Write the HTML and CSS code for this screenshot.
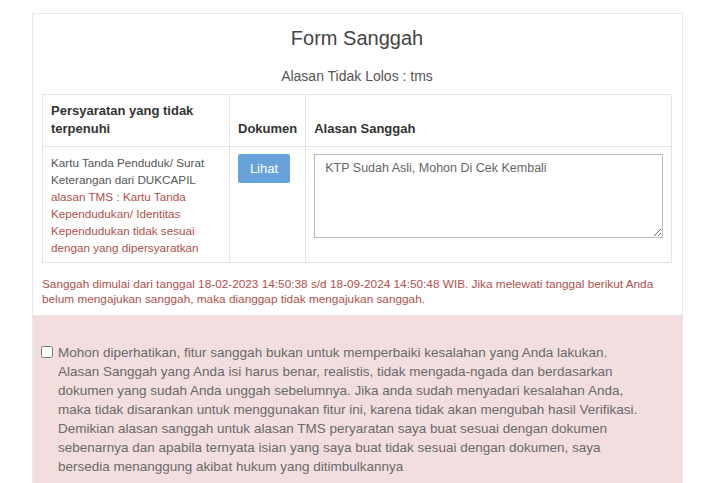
FILE: index.html
```html
<!DOCTYPE html>
<html lang="id">
<head>
  <meta charset="UTF-8" />
  <meta name="viewport" content="width=device-width, initial-scale=1.0" />
  <title>Form Sanggah</title>
  <link rel="stylesheet" href="styles.css">
</head>
<body>
  <div class="card">
    <div class="card-body">
      <h3 class="title">Form Sanggah</h3>
      <p class="subtitle">Alasan Tidak Lolos : tms</p>

      <table class="tbl">
        <thead>
          <tr>
            <th class="col-req">Persyaratan yang tidak terpenuhi</th>
            <th class="col-doc">Dokumen</th>
            <th>Alasan Sanggah</th>
          </tr>
        </thead>
        <tbody>
          <tr>
            <td>
              Kartu Tanda Penduduk/ Surat Keterangan dari DUKCAPIL
              <span class="text-danger">alasan TMS : Kartu Tanda Kependudukan/ Identitas Kependudukan tidak sesuai dengan yang dipersyaratkan</span>
            </td>
            <td><button type="button" class="btn">Lihat</button></td>
            <td><textarea class="reason" rows="4">KTP Sudah Asli, Mohon Di Cek Kembali</textarea></td>
          </tr>
        </tbody>
      </table>

      <p class="note">Sanggah dimulai dari tanggal 18-02-2023 14:50:38 s/d 18-09-2024 14:50:48 WIB. Jika melewati tanggal berikut Anda belum mengajukan sanggah, maka dianggap tidak mengajukan sanggah.</p>
    </div>

    <div class="alert">
      <label class="check">
        <input type="checkbox" />
        Mohon diperhatikan, fitur sanggah bukan untuk memperbaiki kesalahan yang Anda lakukan.<br>
        Alasan Sanggah yang Anda isi harus benar, realistis, tidak mengada-ngada dan berdasarkan dokumen yang sudah Anda unggah sebelumnya. Jika anda sudah menyadari kesalahan Anda, maka tidak disarankan untuk menggunakan fitur ini, karena tidak akan mengubah hasil Verifikasi. Demikian alasan sanggah untuk alasan TMS peryaratan saya buat sesuai dengan dokumen sebenarnya dan apabila ternyata isian yang saya buat tidak sesuai dengan dokumen, saya bersedia menanggung akibat hukum yang ditimbulkannya
      </label>
    </div>
  </div>
</body>
</html>
```

FILE: styles.css
```css
body { margin: 0; background: #fff; font-family: "Liberation Sans", Arial, sans-serif; color: #555; }

.card { margin: 13px 0 0 32px; width: 649px; border: 1px solid #e3ebee; border-bottom: none; background: #fff; }
.card-body { padding: 12px 10px 0 9px; }

.title { margin: 0; font-size: 20px; line-height: 24px; font-weight: normal; color: #444; text-align: center; }
.subtitle { margin: 16px 0 8px; font-size: 14px; line-height: 20px; color: #555; text-align: center; }

.tbl { width: 100%; border-collapse: collapse; border: 1px solid #e4e4e4; }
.tbl th, .tbl td { border: 1px solid #e4e4e4; padding: 7px 8px 8px; text-align: left; }
.tbl th { font-size: 13px; line-height: 18px; font-weight: bold; color: #333; vertical-align: bottom; }
.tbl td { font-size: 11.7px; line-height: 17px; color: #555; vertical-align: top; }
.tbl td:first-child { padding-bottom: 6px; }
.col-req { width: 170px; }
.col-doc { width: 53px; }
.text-danger { color: #b0504c; }

.btn { width: 52px; height: 29px; border: none; border-radius: 2px; background: #67a3d8; color: #fff; font-family: inherit; font-size: 13px; cursor: pointer; }

.reason { display: block; width: 100%; height: 84px; box-sizing: border-box; padding: 6px 10px; border: 1px solid #bbb; font-family: inherit; font-size: 12.5px; color: #666; resize: vertical; }

.note { margin: 14px 0 0; padding-bottom: 8px; font-size: 11.8px; line-height: 15px; color: #b0504c; }

.alert { background: #f2dede; padding: 28px 36px 30px 8px; }
.check { display: block; padding-left: 17px; position: relative; font-size: 13.5px; line-height: 19px; color: #6a6a6a; }
.check input { position: absolute; left: 0; top: 3px; margin: 0; width: 12px; height: 12px; }
```
